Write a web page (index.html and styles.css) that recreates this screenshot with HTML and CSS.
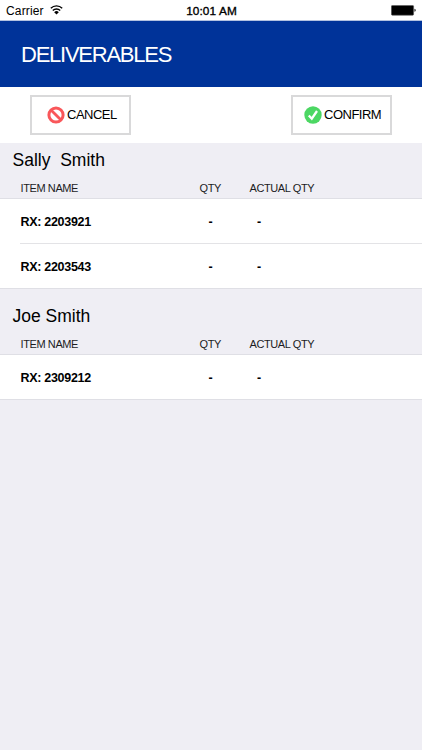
FILE: index.html
```html
<!DOCTYPE html>
<html lang="en">
<head>
    <meta charset="UTF-8">
    <meta name="viewport" content="width=device-width, initial-scale=1.0">
    <title>Deliverables</title>
    <link rel="stylesheet" href="styles.css">
</head>
<body>
    <!-- Status Bar -->
    <div class="status-bar">
        <div class="carrier">
            <span>Carrier</span>
            <svg class="wifi" width="13" height="10" viewBox="0 0 13 10">
                <path d="M0.8 3.3a8 8 0 0 1 11.4 0M2.8 5.5a5.2 5.2 0 0 1 7.4 0" fill="none" stroke="#000" stroke-width="1.4"/>
                <path d="M6.5 9.5L4.2 7.2a3.2 3.2 0 0 1 4.6 0z"/>
            </svg>
        </div>
        <span class="time">10:01 AM</span>
        <svg class="battery" width="26" height="11" viewBox="0 0 26 11">
            <rect x="0.4" y="0.4" width="22.2" height="9.8" rx="1" stroke="#555" stroke-width="0.6"/>
            <path d="M23.5 3.8c1.6 0.3 1.6 2.7 0 3z"/>
        </svg>
    </div>

    <header>
        <h1>DELIVERABLES</h1>
    </header>

    <!-- Action Buttons -->
    <div class="actions">
        <button id="cancel">
            <svg width="18" height="18" viewBox="0 0 18 18">
                <circle cx="9" cy="9" r="7.1" fill="#fff" stroke="#f9575a" stroke-width="3"/>
                <path d="M4.2 4.2l9.6 9.6" stroke="#f9575a" stroke-width="2.8"/>
            </svg>
            <span>CANCEL</span>
        </button>
        <button id="confirm">
            <svg width="18" height="18" viewBox="0 0 18 18">
                <circle cx="9" cy="9" r="8.7" fill="#4cd763"/>
                <path d="M4.8 9.4l3 3.3 5.2-7.7" fill="none" stroke="#fff" stroke-width="2.3"/>
            </svg>
            <span>CONFIRM</span>
        </button>
    </div>

    <!-- Patient Sections -->
    <section class="patient">
        <h2>Sally&nbsp; Smith</h2>
        <div class="columns labels">
            <span>ITEM NAME</span>
            <span>QTY</span>
            <span>ACTUAL QTY</span>
        </div>
        <div class="items">
            <div class="columns item">
                <span>RX: 2203921</span>
                <span class="qty">-</span>
                <span class="actual">-</span>
            </div>
            <div class="columns item">
                <span>RX: 2203543</span>
                <span class="qty">-</span>
                <span class="actual">-</span>
            </div>
        </div>
    </section>

    <section class="patient second">
        <h2>Joe Smith</h2>
        <div class="columns labels">
            <span>ITEM NAME</span>
            <span>QTY</span>
            <span>ACTUAL QTY</span>
        </div>
        <div class="items">
            <div class="columns item">
                <span>RX: 2309212</span>
                <span class="qty">-</span>
                <span class="actual">-</span>
            </div>
        </div>
    </section>
</body>
</html>
```
FILE: styles.css
```css
* {
    box-sizing: border-box;
}

body {
    font-family: "Liberation Sans", Arial, sans-serif;
    background: #efeef4;
    color: #000;
    margin: 0;
    min-height: 100vh;
}

/* Status Bar */
.status-bar {
    display: grid;
    grid-template-columns: 1fr auto 1fr;
    align-items: center;
    height: 21px;
    padding: 1px 5px 0 6px;
    background: #fff;
    font-size: 12px;
    border-bottom: 1px solid #b3c2e0;
}

.carrier {
    display: flex;
    align-items: center;
    gap: 6px;
    letter-spacing: 0.15px;
}

.wifi {
    margin-top: -1px;
}

.time {
    font-size: 11.8px;
    letter-spacing: 0.1px;
    -webkit-text-stroke: 0.35px #000;
}

.battery {
    justify-self: end;
}

/* Header */
header {
    display: flex;
    align-items: center;
    height: 66px;
    padding: 2px 21px 0;
    background: #003399;
}

h1 {
    margin: 0;
    font-size: 22px;
    font-weight: normal;
    letter-spacing: -1.25px;
    color: #fff;
}

/* Action Buttons */
.actions {
    display: flex;
    justify-content: space-between;
    height: 56px;
    padding: 8px 30px 0;
    background: #fff;
}

.actions button {
    display: flex;
    align-items: center;
    gap: 2px;
    width: 101px;
    height: 40px;
    padding: 0 0 0 15px;
    border: 2px solid #d9d9da;
    background: #fff;
    font-family: inherit;
    font-size: 13px;
    letter-spacing: -0.5px;
    color: #000;
}

.actions button span {
    padding-bottom: 2px;
}

#confirm {
    padding-left: 11px;
}

/* Patient Sections */
.patient h2 {
    height: 34px;
    margin: 0;
    padding-left: 12.5px;
    font-size: 17.5px;
    font-weight: normal;
    line-height: 34px;
}

.patient.second h2 {
    height: 44px;
    line-height: 54px;
}

.columns {
    display: grid;
    grid-template-columns: 179px 50px 1fr;
    align-items: center;
    padding-left: 20.5px;
}

.labels {
    height: 21px;
    padding-top: 1px;
    font-size: 11px;
    letter-spacing: -0.4px;
    color: #1c1c1e;
}

.items {
    border-top: 1px solid #dfdfe5;
    border-bottom: 1px solid #dfdfe5;
    background: #fff;
}

.item {
    height: 44px;
    padding-top: 1px;
    font-size: 12.5px;
    font-weight: bold;
    letter-spacing: -0.3px;
}

/* Separator starts at the text, not at the screen edge */
.item + .item {
    height: 45px;
    margin-left: 20px;
    padding-left: 0.5px;
    border-top: 1px solid #e3e3e6;
}

.qty {
    padding-left: 9px;
}

.actual {
    padding-left: 7.5px;
}
```
